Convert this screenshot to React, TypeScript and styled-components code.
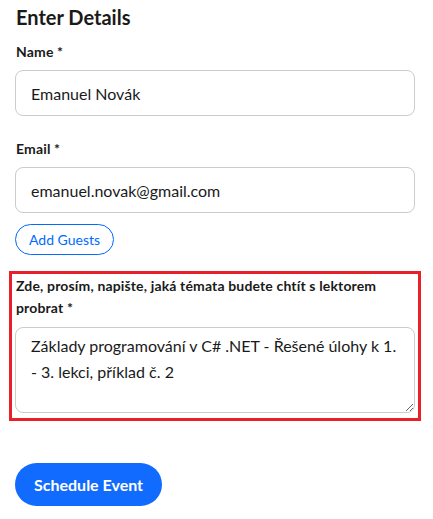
import React from 'react';
import styled, { createGlobalStyle } from 'styled-components';

const GlobalStyle = createGlobalStyle`
    html, body {
        margin: 0;
        padding: 0;
        background: #ffffff;
    }
    body {
        font-family: Lato, "Noto Sans", "Liberation Sans", sans-serif;
        color: #1a1a1a;
    }
    * {
        box-sizing: border-box;
    }
`;

const Form = styled.form`
    width: 433px;
    padding: 5px 18px 0 15px;
    display: flex;
    flex-direction: column;
    align-items: flex-start;
`;

const Title = styled.h2`
    margin: 0 0 0 1px;
    font-size: 20px;
    line-height: 24px;
    font-weight: 700;
    color: #1a1a1a;
`;

const Label = styled.label<{ $top: number }>`
    display: block;
    margin: ${p => p.$top}px 0 0 1px;
    font-size: 14px;
    line-height: 22px;
    font-weight: 700;
    letter-spacing: 0.15px;
    color: #1a1a1a;
`;

const TextInput = styled.input`
    display: block;
    width: 400px;
    height: 46px;
    margin-top: 7px;
    padding: 0 15px;
    border: 1px solid #cccccc;
    border-radius: 8px;
    font-family: inherit;
    font-size: 16px;
    color: #1a1a1a;
    background: #ffffff;
    outline: none;
`;

const GuestsButton = styled.button`
    margin-top: 11px;
    height: 31px;
    padding: 0 13px;
    border: 1px solid #006bff;
    border-radius: 16px;
    background: #ffffff;
    color: #006bff;
    font-family: inherit;
    font-size: 14px;
    cursor: pointer;
`;

const Highlight = styled.div`
    width: 412px;
    margin: 16px 0 0 -6px;
    padding: 1px 3px 5px 3px;
    border: 3px solid #e8202a;
`;

const TopicArea = styled.textarea`
    display: block;
    width: 400px;
    height: 86px;
    margin-top: 8px;
    padding: 5px 15px 8px 15px;
    border: 1px solid #cccccc;
    border-radius: 8px;
    font-family: inherit;
    font-size: 16px;
    line-height: 26px;
    color: #1a1a1a;
    background: #ffffff;
    outline: none;
`;

const SubmitButton = styled.button`
    margin-top: 42px;
    height: 43px;
    padding: 0 19px;
    border: none;
    border-radius: 22px;
    background: #116bff;
    color: #ffffff;
    font-family: inherit;
    font-size: 16px;
    font-weight: 700;
    cursor: pointer;
`;

const App: React.FC = () => {
    return (
        <>
            <GlobalStyle />
            <Form onSubmit={e => e.preventDefault()}>
                <Title>Enter Details</Title>
                <Label $top={12}>Name *</Label>
                <TextInput type="text" defaultValue="Emanuel Novák" />
                <Label $top={22}>Email *</Label>
                <TextInput type="email" defaultValue="emanuel.novak@gmail.com" />
                <GuestsButton type="button">Add Guests</GuestsButton>
                <Highlight>
                    <Label $top={0}>Zde, prosím, napište, jaká témata budete chtít s lektorem probrat *</Label>
                    <TopicArea defaultValue="Základy programování v C# .NET - Řešené úlohy k 1. - 3. lekci, příklad č. 2" />
                </Highlight>
                <SubmitButton type="submit">Schedule Event</SubmitButton>
            </Form>
        </>
    );
};

export default App;
